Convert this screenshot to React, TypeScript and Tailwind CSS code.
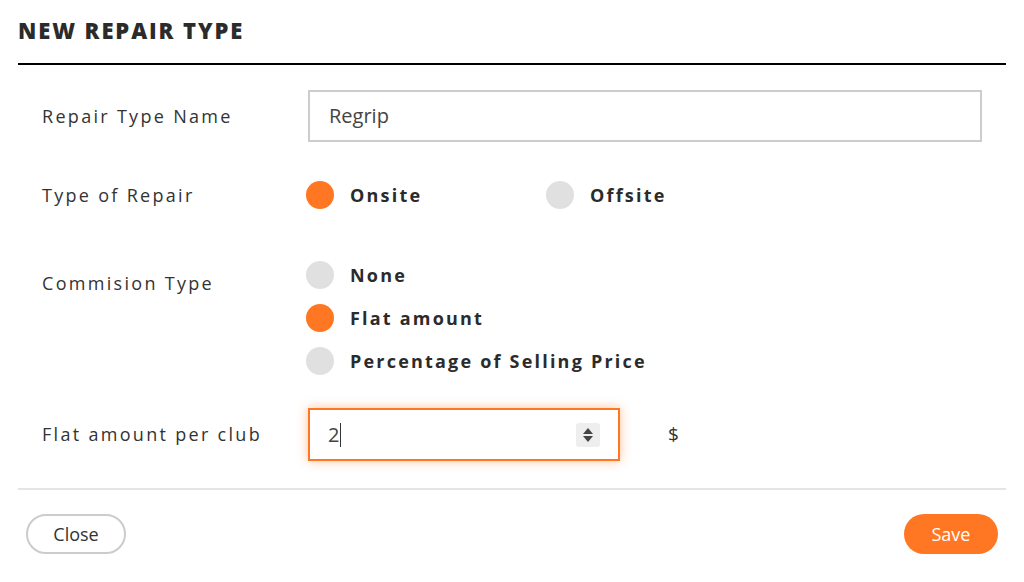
import React from 'react';

const font = { fontFamily: '"Open Sans", "Lato", Arial, sans-serif' };

function Radio({ label, checked }: { label: string; checked?: boolean }) {
  return (
    <div className="flex items-center">
      <span
        className={`h-[28px] w-[28px] rounded-full ${checked ? 'bg-[#ff7722]' : 'bg-[#e0e0e0]'}`}
      />
      <span className="ml-[16px] text-[18px] leading-[24px] font-bold tracking-[2.2px] text-[#2b2b2b]">{label}</span>
    </div>
  );
}

export default function App() {
  return (
    <div className="h-[582px] w-[1024px] bg-white" style={font}>
      {/* Header */}
      <div className="mx-[18px] border-b-2 border-black pt-[17px] pb-[20px]">
        <h1 className="text-[22px] font-extrabold leading-[26px] tracking-[1.9px] text-[#2b2b2b]">
          NEW REPAIR TYPE
        </h1>
      </div>

      {/* Body */}
      <div className="mx-[18px] border-b-2 border-[#e5e5e5] pb-[27px]">
        <div className="flex items-center pt-[25px]">
          <div className="w-[290px] pl-[24px] text-[18px] tracking-[2.3px] text-[#333]">Repair Type Name</div>
          <div className="flex h-[52px] w-[674px] items-center border-2 border-[#cccccc] px-[19px] text-[20px] text-[#444]">
            Regrip
          </div>
        </div>

        <div className="flex items-center pt-[39px]">
          <div className="w-[288px] pl-[24px] text-[18px] tracking-[2.3px] text-[#333]">Type of Repair</div>
          <div className="w-[240px]">
            <Radio label="Onsite" checked />
          </div>
          <Radio label="Offsite" />
        </div>

        <div className="flex pt-[52px]">
          <div className="w-[288px] pt-[9px] pl-[24px] text-[18px] tracking-[2.3px] text-[#333]">Commision Type</div>
          <div className="flex flex-col gap-[15px]">
            <Radio label="None" />
            <Radio label="Flat amount" checked />
            <Radio label="Percentage of Selling Price" />
          </div>
        </div>

        <div className="flex items-center pt-[33px]">
          <div className="w-[290px] pl-[24px] text-[18px] tracking-[2.3px] text-[#333]">Flat amount per club</div>
          <div className="flex h-[53px] w-[312px] items-center border-2 border-[#ff7722] pl-[18px] pr-[18px] text-[20px] text-[#444] shadow-[0_0_10px_rgba(255,119,34,0.45)]">
            <span>2</span>
            <span className="ml-[1px] h-[24px] w-[1px] bg-[#333]" />
            <span className="ml-auto flex h-[24px] w-[24px] items-center justify-center rounded-[3px] bg-[#eeeeee]">
              <svg width="12" height="18" viewBox="0 0 12 18">
                <path d="M6 2 L11 8 H1 Z" fill="#444" />
                <path d="M6 16 L11 10 H1 Z" fill="#444" />
              </svg>
            </span>
          </div>
          <div className="ml-[48px] text-[19px] text-[#333]">$</div>
        </div>
      </div>

      {/* Footer */}
      <div className="flex items-center justify-between px-[26px] pt-[24px]">
        <button className="h-[40px] w-[100px] rounded-full border-2 border-[#cccccc] text-[18px] text-[#333]">
          Close
        </button>
        <button className="h-[40px] w-[94px] rounded-full bg-[#ff7722] text-[18px] text-white">
          Save
        </button>
      </div>
    </div>
  );
}
